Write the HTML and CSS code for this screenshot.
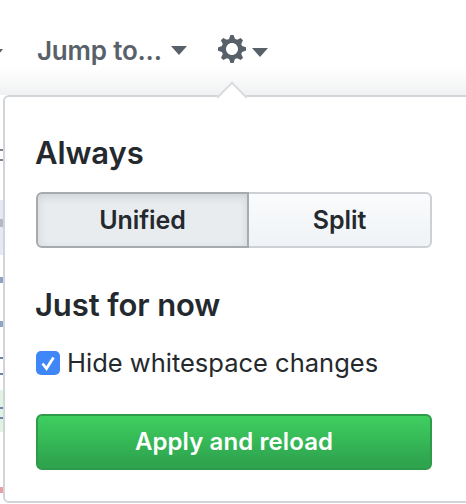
FILE: index.html
```html
<!DOCTYPE html>
<html lang="en">
<head>
<meta charset="utf-8">
<title>Diff settings</title>
<link rel="stylesheet" href="styles.css">
</head>
<body>
<div class="page">
  <header class="topbar">
    <span class="edge-caret"></span>
    <span class="jump">Jump to...</span>
    <span class="caret caret-jump"></span>
    <svg class="gear" viewBox="0 1 14 14" aria-hidden="true"><path fill-rule="evenodd" d="M14 8.77v-1.6l-1.94-.64-.45-1.09.88-1.84-1.13-1.13-1.81.91-1.09-.45-.69-1.92h-1.6l-.63 1.94-1.11.45-1.84-.88-1.13 1.13.91 1.81-.45 1.09L0 7.23v1.59l1.94.64.45 1.09-.88 1.84 1.13 1.13 1.81-.91 1.09.45.69 1.92h1.59l.63-1.94 1.11-.45 1.84.88 1.13-1.13-.92-1.81.47-1.09L14 8.75v.02zM7 11c-1.66 0-3-1.34-3-3s1.34-3 3-3 3 1.34 3 3-1.34 3-3 3z"/></svg>
    <span class="caret caret-gear"></span>
  </header>
  <div class="main">
    <div class="strip"></div>
    <section class="popover">
      <span class="arrow"></span>
      <h2 class="title title-always">Always</h2>
      <div class="segmented">
        <button class="seg seg-on">Unified</button>
        <button class="seg seg-off">Split</button>
      </div>
      <h2 class="title title-now">Just for now</h2>
      <label class="check-row">
        <span class="check">
          <svg viewBox="0 0 24 24" aria-hidden="true"><path d="M6.5 12.5l4 5 7-11" fill="none" stroke="#fff" stroke-width="2.8"/></svg>
        </span>
        Hide whitespace changes
      </label>
      <button class="apply">Apply and reload</button>
    </section>
  </div>
</div>
</body>
</html>
```
FILE: styles.css
```css
html, body {
  margin: 0;
  padding: 0;
  background: #fff;
  overflow: hidden;
}

.page {
  width: 466px;
  height: 504px;
  overflow: hidden;
  display: flex;
  flex-direction: column;
  font-family: "Inter", "Liberation Sans", sans-serif;
  color: #24292e;
}

.topbar {
  height: 95px;
  flex: none;
  display: flex;
  align-items: center;
  padding: 7px 0 0 37px;
  box-sizing: border-box;
  position: relative;
  background: linear-gradient(to bottom, #fff 0, #fff 68px, #f0f1f2 95px);
  color: #586069;
}

.edge-caret {
  position: absolute;
  left: -5px;
  top: 49px;
  border: 4px solid transparent;
  border-top: 5px solid #586069;
}

.jump {
  font-size: 26px;
  font-weight: 600;
  letter-spacing: -0.2px;
  line-height: 32px;
  white-space: nowrap;
}

.caret {
  display: block;
  width: 0;
  height: 0;
  border-left: 8px solid transparent;
  border-right: 8px solid transparent;
  border-top: 9px solid #586069;
}

.caret-jump {
  margin-left: 9px;
  margin-top: -1px;
}

.gear {
  width: 28px;
  height: 28px;
  fill: #586069;
  margin-left: 31px;
  margin-top: -5px;
}

.caret-gear {
  margin-left: 6px;
  margin-top: 2px;
}

.main {
  display: flex;
  flex: none;
  height: 409px;
}

.strip {
  width: 3px;
  height: 407px;
  flex: none;
  background: linear-gradient(to bottom,
    #fff 0 54px, #80858b 54px 56px, #fff 56px 64px, #80858b 64px 66px, #fff 66px 105px,
    #e4e9f5 105px 124px, #b4b8bf 124px 132px, #e4e9f5 132px 160px,
    #fff 160px 182px, #8fa3c4 182px 188px, #fff 188px 226px, #8fa3c4 226px 232px,
    #fff 232px 262px, #6f84ab 262px 264px, #fff 264px 278px, #6f84ab 278px 280px, #fff 280px 295px,
    #dff3e2 295px 312px, #6f84ab 312px 314px, #dff3e2 314px 322px, #6f84ab 322px 324px, #dff3e2 324px 337px,
    #fff 337px 392px, #e8a0a0 392px 398px, #fff 398px);
}

.popover {
  position: relative;
  flex: none;
  width: 480px;
  height: 408px;
  box-sizing: border-box;
  background: #fff;
  border: 2px solid #d1d5da;
  border-radius: 6px;
  padding: 0 0 0 31px;
}

.arrow {
  position: absolute;
  left: 216px;
  top: -11px;
  width: 20px;
  height: 20px;
  background: #fff;
  border-top: 2px solid #d8dbdf;
  border-left: 2px solid #d8dbdf;
  transform: rotate(45deg);
}

.title {
  margin: 0 0 0 -1px;
  font-size: 31px;
  font-weight: 600;
  letter-spacing: -0.1px;
  line-height: 36px;
}

.title-always {
  margin-top: 38px;
}

.segmented {
  width: 396px;
  height: 56px;
  margin-top: 21px;
  display: grid;
  grid-template-columns: 213px 183px;
}

.seg {
  margin: 0;
  padding: 0;
  font: 600 25px/32px "Inter", "Liberation Sans", sans-serif;
  letter-spacing: -0.1px;
  color: #24292e;
}

.seg-on {
  background: #e9ecef;
  border: 2px solid #a6abb0;
  border-radius: 6px 0 0 6px;
  box-shadow: inset 0 3px 8px rgba(27, 31, 35, 0.12);
}

.seg-off {
  background: linear-gradient(to bottom, #fafbfc, #eff3f6);
  border: 2px solid #cdd0d4;
  border-left: 0;
  border-radius: 0 6px 6px 0;
}

.title-now {
  margin-top: 39px;
}

.check-row {
  display: flex;
  align-items: center;
  margin-top: 25px;
  font-size: 25.5px;
  line-height: 30px;
  white-space: nowrap;
}

.check {
  width: 24px;
  height: 24px;
  margin-right: 7px;
  flex: none;
  background: #3f86f7;
  border-radius: 5px;
  display: block;
}

.check svg {
  display: block;
  width: 24px;
  height: 24px;
}

.apply {
  display: block;
  width: 396px;
  height: 56px;
  margin: 36px 0 0;
  padding: 0;
  font: 600 24px/32px "Inter", "Liberation Sans", sans-serif;
  letter-spacing: 0.1px;
  color: #fff;
  background: linear-gradient(to bottom, #3fcf60, #2ea44f 90%);
  border: 2px solid #2f9a4a;
  border-radius: 6px;
}
```
